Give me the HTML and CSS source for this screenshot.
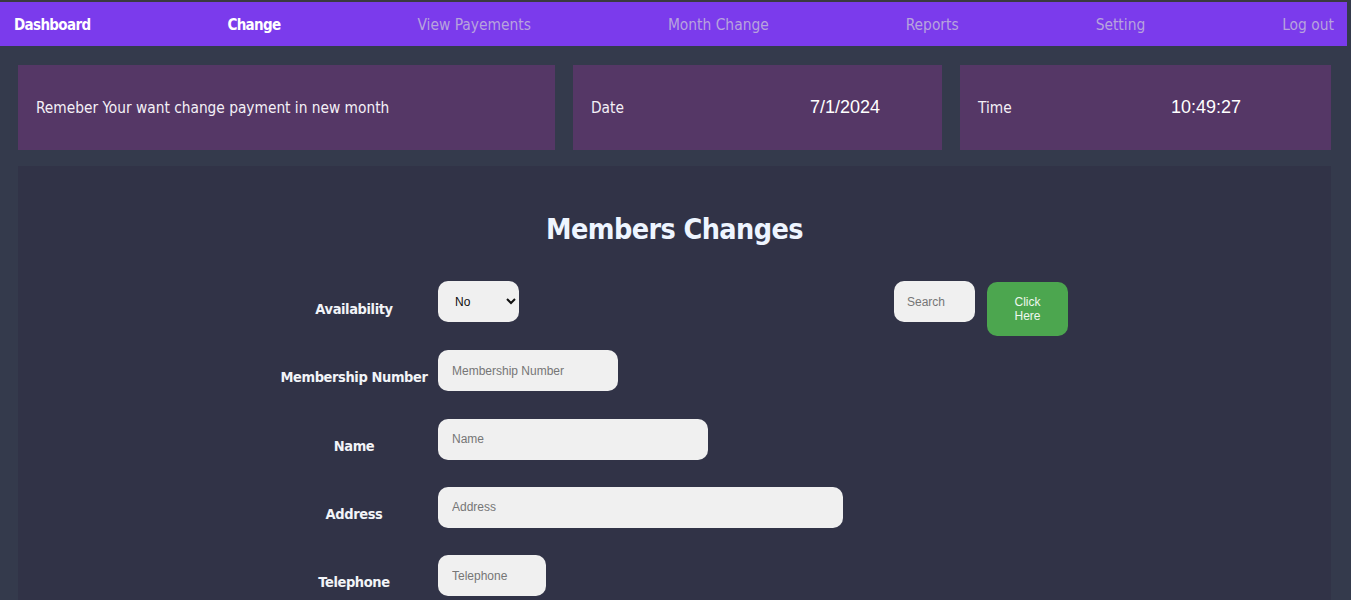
FILE: index.html
```html
<!DOCTYPE html>
<html lang="en">
<head>
<meta charset="utf-8">
<title>Members Changes</title>
<link rel="stylesheet" href="styles.css">
</head>
<body>
<nav class="topnav">
  <a class="nav-link active" href="#">Dashboard</a>
  <a class="nav-link active" href="#">Change</a>
  <a class="nav-link" href="#">View Payements</a>
  <a class="nav-link" href="#">Month Change</a>
  <a class="nav-link" href="#">Reports</a>
  <a class="nav-link" href="#">Setting</a>
  <a class="nav-link" href="#">Log out</a>
</nav>
<main class="page">
  <section class="cards">
    <div class="card card-note">Remeber Your want change payment in new month</div>
    <div class="card card-date"><span class="card-label">Date</span><span class="card-value">7/1/2024</span></div>
    <div class="card card-time"><span class="card-label">Time</span><span class="card-value">10:49:27</span></div>
  </section>
  <section class="panel">
    <h1 class="panel-title">Members Changes</h1>
    <form class="member-form">
      <label class="field-label">Availability</label>
      <div class="field-cell">
        <select class="field select-field">
          <option>No</option>
          <option>Yes</option>
        </select>
      </div>
      <div class="field-cell"><input class="field search-field" type="text" placeholder="Search"></div>
      <div class="btn-cell"><button class="go-btn" type="button">Click Here</button></div>

      <label class="field-label">Membership Number</label>
      <div class="field-cell wide"><input class="field w-member" type="text" placeholder="Membership Number"></div>

      <label class="field-label">Name</label>
      <div class="field-cell wide"><input class="field w-name" type="text" placeholder="Name"></div>

      <label class="field-label">Address</label>
      <div class="field-cell wide"><input class="field w-address" type="text" placeholder="Address"></div>

      <label class="field-label">Telephone</label>
      <div class="field-cell wide"><input class="field w-tel" type="text" placeholder="Telephone"></div>
    </form>
  </section>
</main>
</body>
</html>
```

FILE: styles.css
```css
* { box-sizing: border-box; }

html, body {
  margin: 0;
  padding: 0;
  background: #343a4c;
  font-family: "DejaVu Sans Condensed", "DejaVu Sans", sans-serif;
  overflow: hidden;
}

.topnav {
  height: 46px;
  margin-right: 4px;
  border-top: 2px solid #3a3a3e;
  background: #7b3bec;
  display: flex;
  align-items: center;
  justify-content: space-between;
  padding: 2px 13px 0 14px;
}

.nav-link {
  font-size: 15.4px;
  color: #b7a3dd;
  text-decoration: none;
}

.nav-link.active {
  color: #ffffff;
  font-weight: bold;
  font-size: 15px;
  letter-spacing: -0.65px;
}

.page {
  padding: 19px 20px 0 18px;
}

.cards {
  display: grid;
  grid-template-columns: 537fr 369fr 371fr;
  column-gap: 18px;
}

.card {
  height: 85px;
  background: #553766;
  color: #f4f0f6;
  display: flex;
  align-items: center;
  padding: 0 18px;
  font-size: 15.3px;
}

.card-date .card-label { width: 219px; }
.card-time .card-label { width: 193px; }

.card-value {
  font-family: "Liberation Sans", Arial, sans-serif;
  font-size: 18px;
  color: #ffffff;
}

.panel {
  margin-top: 16px;
  background: #313347;
  min-height: 500px;
  padding-top: 47px;
}

.panel-title {
  margin: 0;
  text-align: center;
  font-size: 28.5px;
  line-height: 34px;
  font-weight: bold;
  letter-spacing: -0.6px;
  color: #eef5ff;
}

.member-form {
  margin-top: 34px;
  display: grid;
  grid-template-columns: 168px 456px 93px 92px;
  justify-content: center;
  row-gap: 14.3px;
}

.field-label {
  grid-column: 1;
  align-self: center;
  text-align: center;
  color: #f2f4f8;
  font-size: 14.5px;
  font-weight: bold;
  letter-spacing: -0.4px;
}

.field-cell {
  padding-bottom: 13px;
}

.field-cell.wide {
  grid-column: 2 / span 3;
}

.field {
  display: block;
  height: 41px;
  border: none;
  border-radius: 10px;
  background: #f0f0f0;
  font-family: "Liberation Sans", Arial, sans-serif;
  font-size: 12px;
  color: #111;
  padding: 0 14px;
  outline: none;
}

.field::placeholder { color: #767676; }

.select-field {
  width: 81px;
  padding: 0 6px 0 13px;
}

.search-field {
  width: 81px;
  padding: 0 13px;
}

.w-member { width: 180px; }
.w-name { width: 270px; }
.w-address { width: 405px; }
.w-tel { width: 108px; }

.btn-cell {
  padding-top: 1px;
}

.go-btn {
  display: block;
  width: 81px;
  height: 54px;
  border: none;
  border-radius: 10px;
  background: #4ca64f;
  color: #eef7ee;
  font-family: "Liberation Sans", Arial, sans-serif;
  font-size: 12px;
  line-height: 14px;
  padding: 0 18px;
}
```
